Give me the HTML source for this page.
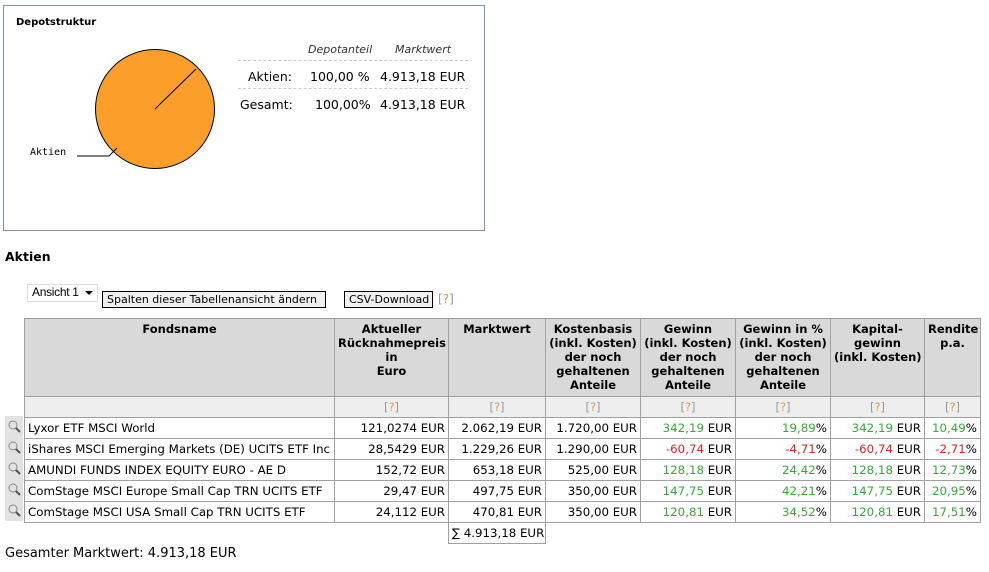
<!DOCTYPE html>
<html><head><meta charset="utf-8">
<style>
*{margin:0;padding:0;box-sizing:border-box}
body{width:989px;height:572px;background:#fff;font-family:"DejaVu Sans","Liberation Sans",sans-serif;font-size:11px;color:#000;position:relative;overflow:hidden}
.abs{position:absolute}
.box{left:3px;top:5px;width:482px;height:226px;border:1px solid #8391a8}
table.m{position:absolute;left:24px;top:318px;border-collapse:collapse;table-layout:fixed;width:956px}
table.m td,table.m th{border:1px solid #a0a0a0;padding:0 3px;white-space:nowrap;overflow:hidden}
table.m th{background:#d9d9d9;font-weight:bold;vertical-align:top;text-align:center;line-height:14px;padding-top:3px;height:78px;font-size:11.5px}
table.m tr.q td{background:#eeeeee;height:21px;text-align:center;color:#e69a45;font-size:11.5px}
table.m tr.d td{height:21px;text-align:right;font-size:11.8px}
table.m tr.d td:first-child{text-align:left}
.g{color:#33aa33}.r{color:#dd2222}
.qm{color:#e69a45}.qb{color:#999}
.btn{border:1px solid #000;background:#f0f0f0;height:17px;line-height:15px;padding:0 4px;font-size:11px;white-space:nowrap}
.ic{position:absolute;left:5px;width:18px;height:21px;background:#e2e2e2}
</style></head><body>
<div class="abs box"></div>
<div class="abs" style="left:16px;top:17px;font-weight:bold;font-size:10px">Depotstruktur</div>
<svg class="abs" style="left:0;top:0" width="240" height="200">
<circle cx="155" cy="109" r="59.5" fill="#fc9f2a" stroke="#000" stroke-width="1"/>
<line x1="155" y1="109" x2="196" y2="69" stroke="#000" stroke-width="1"/>
<polyline points="77,156 109,156 117,148" fill="none" stroke="#000" stroke-width="1"/>
</svg>
<div class="abs" style="left:30px;top:147px;font-family:'DejaVu Sans Mono','Liberation Mono',monospace;font-size:10px">Aktien</div>
<div class="abs" style="left:308px;top:43px;font-style:italic;color:#333">Depotanteil</div>
<div class="abs" style="left:395px;top:43px;font-style:italic;color:#333">Marktwert</div>
<div class="abs" style="left:238px;top:60px;width:230px;border-top:1px dashed #ccc"></div>
<div class="abs" style="left:238px;top:88px;width:230px;border-top:1px dashed #ccc"></div>
<div class="abs" style="left:248px;top:69px;font-size:12.5px">Aktien:</div>
<div class="abs" style="left:310px;top:69px;font-size:12.5px">100,00 %</div>
<div class="abs" style="left:380px;top:69px;font-size:12.5px">4.913,18 EUR</div>
<div class="abs" style="left:240px;top:97px;font-size:12.5px">Gesamt:</div>
<div class="abs" style="left:315px;top:97px;font-size:12.5px">100,00%</div>
<div class="abs" style="left:380px;top:97px;font-size:12.5px">4.913,18 EUR</div>

<div class="abs" style="left:5px;top:249px;font-weight:bold;font-size:12.5px">Aktien</div>
<div class="abs" style="left:27px;top:284px;width:71px;height:18px;border:1px solid #ddd;font-family:'Liberation Sans',sans-serif;font-size:12px;padding-left:4px;line-height:14px;white-space:nowrap;letter-spacing:-0.3px">Ansicht 1</div>
<div class="abs" style="left:85px;top:291px;width:0;height:0;border-left:4px solid transparent;border-right:4px solid transparent;border-top:4px solid #000"></div>
<div class="abs btn" style="left:102px;top:291px;width:224px">Spalten dieser Tabellenansicht ändern</div>
<div class="abs btn" style="left:344px;top:291px;width:89px">CSV-Download</div>
<div class="abs" style="left:438px;top:292px;color:#999;font-size:12px">[<span class="qm">?</span>]</div>

<div class="ic" style="top:416px"></div><div class="ic" style="top:437px"></div><div class="ic" style="top:458px"></div><div class="ic" style="top:479px"></div><div class="ic" style="top:500px"></div>
<svg class="abs" style="left:5px;top:416px" width="18" height="105">
<g fill="none" stroke="#888"><circle cx="8" cy="9" r="4"/><line x1="11" y1="12" x2="15" y2="16" stroke="#555" stroke-width="2"/>
<circle cx="8" cy="30" r="4"/><line x1="11" y1="33" x2="15" y2="37" stroke="#555" stroke-width="2"/>
<circle cx="8" cy="51" r="4"/><line x1="11" y1="54" x2="15" y2="58" stroke="#555" stroke-width="2"/>
<circle cx="8" cy="72" r="4"/><line x1="11" y1="75" x2="15" y2="79" stroke="#555" stroke-width="2"/>
<circle cx="8" cy="93" r="4"/><line x1="11" y1="96" x2="15" y2="100" stroke="#555" stroke-width="2"/></g>
</svg>

<table class="m">
<colgroup><col style="width:310px"><col style="width:114px"><col style="width:97px"><col style="width:95px"><col style="width:95px"><col style="width:95px"><col style="width:94px"><col style="width:56px"></colgroup>
<tr><th>Fondsname</th><th>Aktueller<br>Rücknahmepreis<br>in<br>Euro</th><th>Marktwert</th><th>Kostenbasis<br>(inkl. Kosten)<br>der noch<br>gehaltenen<br>Anteile</th><th>Gewinn<br>(inkl. Kosten)<br>der noch<br>gehaltenen<br>Anteile</th><th>Gewinn in %<br>(inkl. Kosten)<br>der noch<br>gehaltenen<br>Anteile</th><th>Kapital-<br>gewinn<br>(inkl. Kosten)</th><th>Rendite<br>p.a.</th></tr>
<tr class="q"><td></td><td><span class="qb">[</span>?<span class="qb">]</span></td><td><span class="qb">[</span>?<span class="qb">]</span></td><td><span class="qb">[</span>?<span class="qb">]</span></td><td><span class="qb">[</span>?<span class="qb">]</span></td><td><span class="qb">[</span>?<span class="qb">]</span></td><td><span class="qb">[</span>?<span class="qb">]</span></td><td><span class="qb">[</span>?<span class="qb">]</span></td></tr>
<tr class="d"><td>Lyxor ETF MSCI World</td><td>121,0274 EUR</td><td>2.062,19 EUR</td><td>1.720,00 EUR</td><td><span class="g">342,19</span> EUR</td><td><span class="g">19,89</span>%</td><td><span class="g">342,19</span> EUR</td><td><span class="g">10,49</span>%</td></tr>
<tr class="d"><td>iShares MSCI Emerging Markets (DE) UCITS ETF Inc</td><td>28,5429 EUR</td><td>1.229,26 EUR</td><td>1.290,00 EUR</td><td><span class="r">-60,74</span> EUR</td><td><span class="r">-4,71</span>%</td><td><span class="r">-60,74</span> EUR</td><td><span class="r">-2,71</span>%</td></tr>
<tr class="d"><td>AMUNDI FUNDS INDEX EQUITY EURO - AE D</td><td>152,72 EUR</td><td>653,18 EUR</td><td>525,00 EUR</td><td><span class="g">128,18</span> EUR</td><td><span class="g">24,42</span>%</td><td><span class="g">128,18</span> EUR</td><td><span class="g">12,73</span>%</td></tr>
<tr class="d"><td>ComStage MSCI Europe Small Cap TRN UCITS ETF</td><td>29,47 EUR</td><td>497,75 EUR</td><td>350,00 EUR</td><td><span class="g">147,75</span> EUR</td><td><span class="g">42,21</span>%</td><td><span class="g">147,75</span> EUR</td><td><span class="g">20,95</span>%</td></tr>
<tr class="d"><td>ComStage MSCI USA Small Cap TRN UCITS ETF</td><td>24,112 EUR</td><td>470,81 EUR</td><td>350,00 EUR</td><td><span class="g">120,81</span> EUR</td><td><span class="g">34,52</span>%</td><td><span class="g">120,81</span> EUR</td><td><span class="g">17,51</span>%</td></tr>
<tr class="d"><td style="border:none"></td><td style="border:none;border-right:1px solid #a0a0a0"></td><td>∑ 4.913,18 EUR</td><td style="border:none"></td><td style="border:none"></td><td style="border:none"></td><td style="border:none"></td><td style="border:none"></td></tr>
</table>
<div class="abs" style="left:5px;top:546px;font-size:13px">Gesamter Marktwert: 4.913,18 EUR</div>
</body></html>
